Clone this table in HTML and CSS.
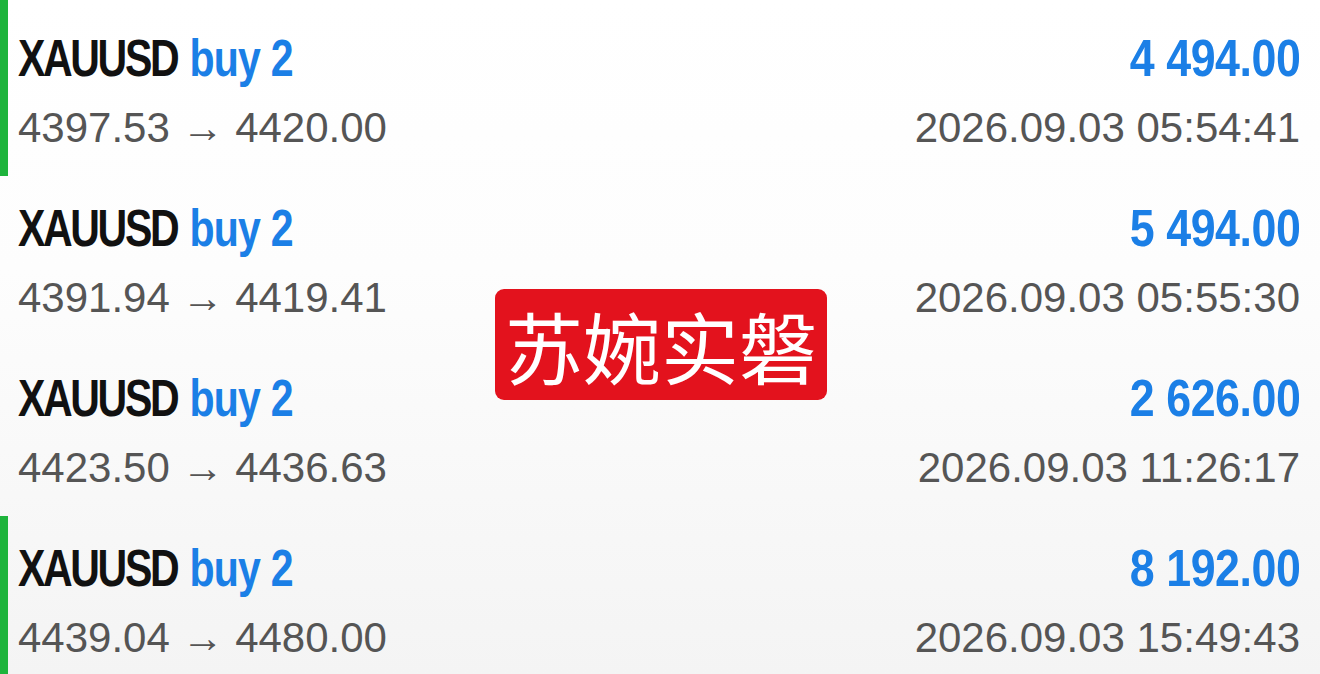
FILE: index.html
```html
<!DOCTYPE html>
<html lang="zh">
<head>
    <meta charset="UTF-8">
    <meta name="viewport" content="width=device-width, initial-scale=1.0">
    <title>Trade History</title>
    <link rel="stylesheet" href="styles.css">
</head>
<body>
    <main class="history">
        <div class="trade closed-win">
            <div class="line top">
                <span class="symbol">XAUUSD <span class="side">buy 2</span></span>
                <span class="profit">4 494.00</span>
            </div>
            <div class="line bottom">
                <span class="prices">4397.53 → 4420.00</span>
                <span class="time">2026.09.03 05:54:41</span>
            </div>
        </div>

        <div class="trade">
            <div class="line top">
                <span class="symbol">XAUUSD <span class="side">buy 2</span></span>
                <span class="profit">5 494.00</span>
            </div>
            <div class="line bottom">
                <span class="prices">4391.94 → 4419.41</span>
                <span class="time">2026.09.03 05:55:30</span>
            </div>
        </div>

        <div class="trade">
            <div class="line top">
                <span class="symbol">XAUUSD <span class="side">buy 2</span></span>
                <span class="profit">2 626.00</span>
            </div>
            <div class="line bottom">
                <span class="prices">4423.50 → 4436.63</span>
                <span class="time">2026.09.03 11:26:17</span>
            </div>
        </div>

        <div class="trade closed-win">
            <div class="line top">
                <span class="symbol">XAUUSD <span class="side">buy 2</span></span>
                <span class="profit">8 192.00</span>
            </div>
            <div class="line bottom">
                <span class="prices">4439.04 → 4480.00</span>
                <span class="time">2026.09.03 15:49:43</span>
            </div>
        </div>

        <!-- watermark label -->
        <div class="stamp">苏婉实磐</div>
    </main>
</body>
</html>
```

FILE: styles.css
```css
body, html {
    margin: 0;
    padding: 0;
    height: 100%;
    overflow: hidden;
    font-family: 'Liberation Sans', Arial, sans-serif;
    background: linear-gradient(#ffffff 0%, #fdfdfd 40%, #f4f4f4 100%);
}

.history {
    position: relative;
    height: 674px;
}

.trade {
    position: relative;
    height: 170px;
    box-sizing: border-box;
    padding: 22px 20px 0 18px;
}

.trade:first-child {
    height: 176px;
    padding-top: 28px;
}

.closed-win::before {
    content: "";
    position: absolute;
    left: 0;
    top: 0;
    bottom: 0;
    width: 8px;
    background-color: #1eb43c;
}

.trade:last-of-type::before {
    top: 4px;
}

.line {
    display: flex;
    justify-content: space-between;
    align-items: center;
}

.top {
    height: 60px;
}

.bottom {
    height: 76px;
    margin-top: 2px;
}

/* no narrow face installed, so squeeze the bold line */
.symbol,
.profit {
    display: inline-block;
    font-weight: bold;
    font-size: 52px;
    line-height: 60px;
}

.symbol {
    color: #111;
    letter-spacing: -3px;
    transform: scaleX(0.79);
    transform-origin: left center;
}

.side {
    color: #1b7fe6;
    letter-spacing: -1px;
    margin-left: 4px;
}

.profit {
    color: #1b7fe6;
    letter-spacing: -0.5px;
    transform: scaleX(0.86);
    transform-origin: right center;
}

.prices,
.time {
    font-size: 42px;
    line-height: 76px;
    color: #555;
}

.stamp {
    position: absolute;
    left: 495px;
    top: 289px;
    width: 332px;
    height: 111px;
    border-radius: 9px;
    background-color: #e3121d;
    color: white;
    display: flex;
    align-items: center;
    justify-content: center;
    font-family: 'Noto Sans CJK SC', sans-serif;
    font-size: 78px;
}
```
